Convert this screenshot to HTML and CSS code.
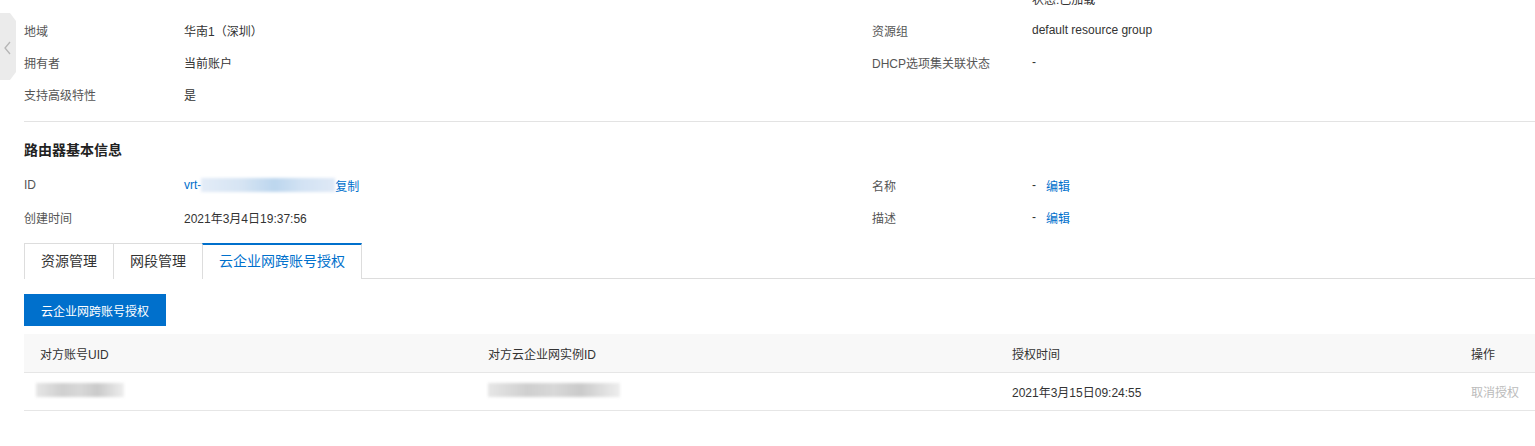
FILE: index.html
```html
<!DOCTYPE html>
<html lang="zh-CN">
<head>
<meta charset="utf-8">
<link rel="stylesheet" href="styles.css">
</head>
<body>
<div class="toggle">
  <svg width="17" height="70" viewBox="0 0 17 70"><polygon points="0,0 10,0 16,8 16,59 10,67 0,67" fill="#ebebeb"/><polyline points="10,29 5,35 10,41" fill="none" stroke="#b5b5b5" stroke-width="1.3"/></svg>
</div>
<div class="page">
  <div class="info">
    <div class="cell label"></div><div class="cell"></div><div class="cell label"></div><div class="cell value">状态:已加载</div>
    <div class="cell label">地域</div><div class="cell value">华南1（深圳）</div><div class="cell label">资源组</div><div class="cell value">default resource group</div>
    <div class="cell label">拥有者</div><div class="cell value">当前账户</div><div class="cell label">DHCP选项集关联状态</div><div class="cell value">-</div>
    <div class="cell label">支持高级特性</div><div class="cell value">是</div><div class="cell"></div><div class="cell"></div>
  </div>
  <div class="divider"></div>
  <h2 class="title">路由器基本信息</h2>
  <div class="info info2">
    <div class="cell label">ID</div><div class="cell value"><span class="link">vrt-</span><span class="blur blue"></span><span class="link">复制</span></div><div class="cell label">名称</div><div class="cell value">-<span class="link edit">编辑</span></div>
    <div class="cell label">创建时间</div><div class="cell value">2021年3月4日19:37:56</div><div class="cell label">描述</div><div class="cell value">-<span class="link edit">编辑</span></div>
  </div>
  <div class="tabs">
    <div class="tab">资源管理</div>
    <div class="tab">网段管理</div>
    <div class="tab active">云企业网跨账号授权</div>
  </div>
  <button class="btn">云企业网跨账号授权</button>
  <div class="table">
    <div class="tr th">
      <div class="td c1">对方账号UID</div><div class="td c2">对方云企业网实例ID</div><div class="td c3">授权时间</div><div class="td c4">操作</div>
    </div>
    <div class="tr">
      <div class="td c1"><span class="blur grey w1"></span></div><div class="td c2"><span class="blur grey w2"></span></div><div class="td c3">2021年3月15日09:24:55</div><div class="td c4 disabled">取消授权</div>
    </div>
  </div>
</div>
</body>
</html>
```
FILE: styles.css
```css
* { box-sizing: border-box; }
body {
  margin: 0;
  font-family: "Liberation Sans", "Noto Sans CJK SC", sans-serif;
  font-size: 12px;
  color: #333;
  background: #fff;
  overflow: hidden;
}
.toggle { position: absolute; left: 0; top: 13px; }
.toggle svg { display: block; }
.page { padding-left: 24px; margin-top: -18px; }
.info {
  display: grid;
  grid-template-columns: 160px 688px 160px 1fr;
  grid-auto-rows: 32px;
}
.cell { display: flex; align-items: center; white-space: nowrap; }
.label { color: #555; }
.value { color: #333; }
.divider { height: 1px; background: #e3e3e3; margin-top: 11px; }
.title {
  margin: 0;
  font-size: 14px;
  font-weight: bold;
  color: #222;
  line-height: 20px;
  padding-top: 18px;
  padding-bottom: 9px;
}
.link { color: #0070cc; }
.edit { margin-left: 10px; }
.blur { display: inline-block; height: 14px; filter: blur(1.5px); }
.blue { width: 134px; background: linear-gradient(90deg, #e3ecf7 0%, #d6e4f3 30%, #bcd6ee 55%, #d2e2f3 75%, #dfe9f6 100%); }
.grey { background: linear-gradient(90deg, #e6e6e6, #cfcfcf 30%, #d8d8d8 50%, #cacaca 70%, #eeeeee); }
.w1 { width: 88px; margin-left: -4px; }
.w2 { width: 132px; }
.tabs {
  display: flex;
  margin-top: 10px;
  border-bottom: 1px solid #ddd;
  height: 36px;
}
.tab {
  height: 36px;
  padding: 0 16px;
  font-size: 14px;
  line-height: 34px;
  color: #333;
  border: 1px solid #ddd;
  border-bottom: none;
  margin-left: -1px;
  background: #fff;
}
.tab:first-child { margin-left: 0; }
.tab.active {
  color: #0070cc;
  border-top: 2px solid #0070cc;
  line-height: 33px;
  box-shadow: 0 1px 0 #fff;
}
.btn {
  display: block;
  margin-top: 15px;
  height: 32px;
  width: 142px;
  padding: 0;
  border: none;
  background: #0070cc;
  color: #fff;
  font-family: inherit;
  font-size: 12px;
}
.table { margin-top: 8px; }
.tr { display: flex; height: 38px; align-items: center; border-bottom: 1px solid #e6e6e6; }
.th { background: #f8f8f8; height: 39px; }
.td { white-space: nowrap; }
.c1 { width: 464px; padding-left: 16px; }
.c2 { width: 524px; }
.c3 { width: 459px; }
.c4 { flex: 1; }
.disabled { color: #bbb; }
```
